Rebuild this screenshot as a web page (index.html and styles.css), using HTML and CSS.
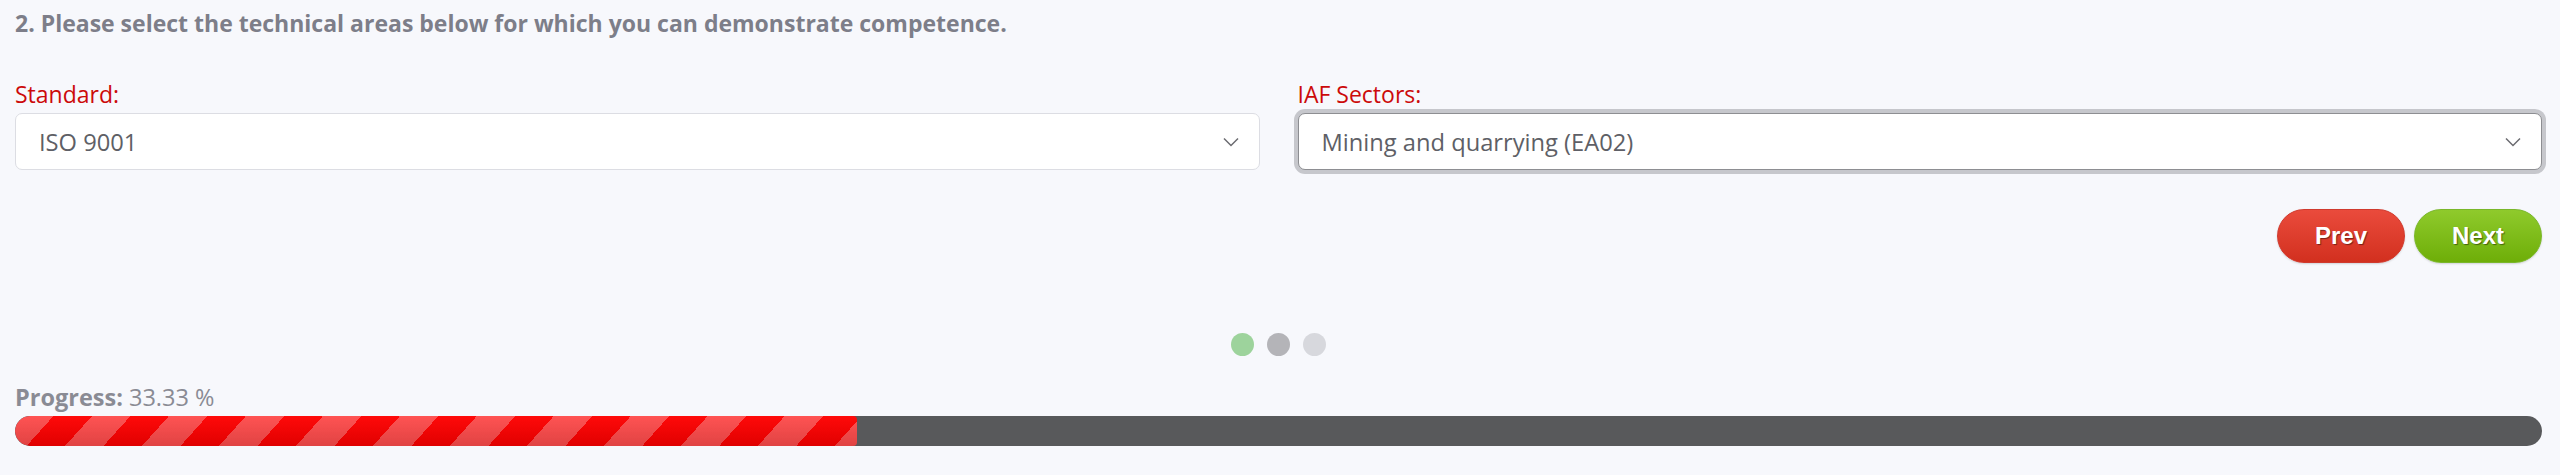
FILE: index.html
```html
<!DOCTYPE html>
<html lang="en">
<head>
<meta charset="utf-8">
<title>Technical areas</title>
<link rel="stylesheet" href="styles.css">
</head>
<body>
<main class="page">
  <h2 class="question">2. Please select the technical areas below for which you can demonstrate competence.</h2>

  <div class="fields">
    <div class="field">
      <label class="field-label">Standard:</label>
      <div class="select">
        <span class="select-value">ISO 9001</span>
        <svg class="chevron" viewBox="0 0 16 10" width="16" height="10"><path d="M1 1.5 L8 8.5 L15 1.5" fill="none" stroke="#6b6b70" stroke-width="1.5"/></svg>
      </div>
    </div>
    <div class="field">
      <label class="field-label">IAF Sectors:</label>
      <div class="select select-focus">
        <span class="select-value">Mining and quarrying (EA02)</span>
        <svg class="chevron" viewBox="0 0 16 10" width="16" height="10"><path d="M1 1.5 L8 8.5 L15 1.5" fill="none" stroke="#6b6b70" stroke-width="1.5"/></svg>
      </div>
    </div>
  </div>

  <div class="actions">
    <button class="btn btn-prev">Prev</button>
    <button class="btn btn-next">Next</button>
  </div>

  <div class="dots">
    <span class="dot dot-done"></span>
    <span class="dot dot-current"></span>
    <span class="dot"></span>
  </div>

  <div class="progress-label"><strong>Progress:</strong> 33.33 %</div>
  <div class="progress">
    <div class="progress-fill" style="width:33.33%"></div>
  </div>
</main>
</body>
</html>
```

FILE: styles.css
```css
html, body {
  margin: 0;
  padding: 0;
  background: #f7f8fc;
}

.page {
  padding: 7px 18px 0 15px;
  font-family: "Open Sans", "Noto Sans", sans-serif;
}

.question {
  margin: 0;
  font-size: 23px;
  line-height: 32px;
  font-weight: 700;
  color: #7d7e89;
}

.fields {
  display: grid;
  grid-template-columns: 1fr 1fr;
  column-gap: 38px;
  margin-top: 39px;
}

.field {
  display: flex;
  flex-direction: column;
}

.field-label {
  font-size: 23px;
  line-height: 32px;
  color: #cc0a0a;
  margin-bottom: 3px;
}

.select {
  box-sizing: border-box;
  height: 57px;
  background: #fff;
  border: 1px solid #dcdde3;
  border-radius: 7px;
  display: flex;
  align-items: center;
  justify-content: space-between;
  padding: 0 20px 0 23px;
}

.select-focus {
  border-color: #8d8e92;
  box-shadow: 0 0 0 4px #c6c7cc;
}

.select-value {
  font-size: 23.7px;
  color: #5e5f66;
}

.chevron {
  display: block;
}

.actions {
  display: flex;
  justify-content: flex-end;
  gap: 9px;
  margin-top: 39px;
}

.btn {
  width: 128px;
  height: 54px;
  border-radius: 27px;
  border: 1px solid transparent;
  font-family: "Liberation Sans", Arial, sans-serif;
  font-weight: 700;
  font-size: 24px;
  color: #fff;
  text-shadow: 1px 1px 1px rgba(0, 0, 0, 0.45);
  box-shadow: 0 1px 2px rgba(0, 0, 0, 0.15);
  padding: 0;
}

.btn-prev {
  background: linear-gradient(to bottom, #ea4b3c, #d2301f);
  border-color: #d03a2e;
}

.btn-next {
  background: linear-gradient(to bottom, #8fca2c, #6eae08);
  border-color: #7ab72a;
}

.dots {
  display: flex;
  justify-content: center;
  gap: 13px;
  margin-top: 70px;
}

.dot {
  width: 23px;
  height: 23px;
  border-radius: 50%;
  background: #d7d8dd;
}

.dot-done {
  background: #9dd39c;
}

.dot-current {
  background: #b4b4b8;
}

.progress-label {
  margin-top: 26px;
  font-size: 23.5px;
  line-height: 31px;
  color: #8a8b94;
}

.progress-label strong {
  font-weight: 700;
}

.progress {
  margin-top: 3px;
  height: 30px;
  border-radius: 15px;
  background: #58595b;
  overflow: hidden;
}

.progress-fill {
  height: 100%;
  border-radius: 15px 4px 4px 15px;
  background-color: #ff1010;
  background-image:
    linear-gradient(to bottom, rgba(255, 255, 255, 0.04), rgba(0, 0, 0, 0.12)),
    repeating-linear-gradient(132deg, #ff4c4c 0, #ff4c4c 28.6px, #ff0000 28.6px, #ff0000 57.2px);
}
```
